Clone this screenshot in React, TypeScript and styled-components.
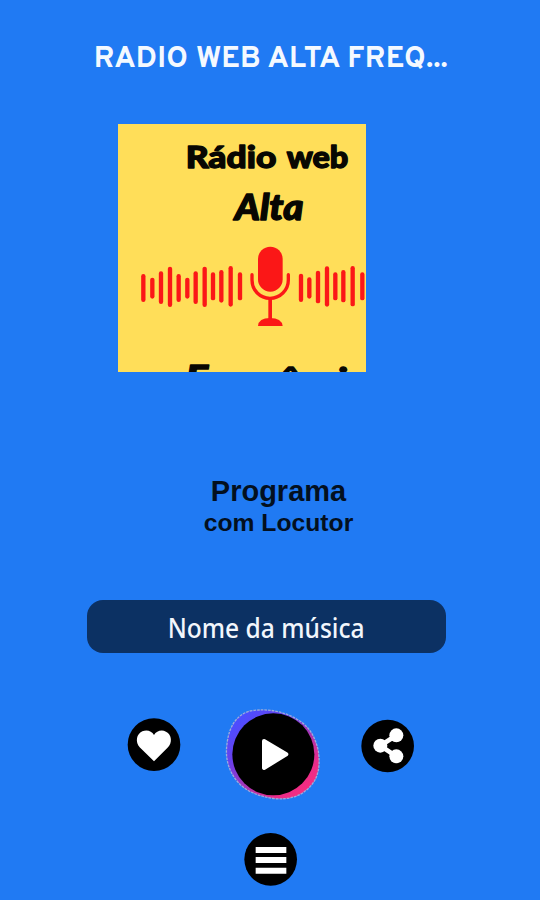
import React from "react";
import styled, { createGlobalStyle } from "styled-components";

const GlobalStyle = createGlobalStyle`
  * { box-sizing: border-box; }
  body { margin: 0; background: #207af3; }
`;

const Screen = styled.main`
  width: 540px;
  height: 900px;
  overflow: hidden;
  display: flex;
  flex-direction: column;
  align-items: center;
  background: #207af3;
`;

const Title = styled.h1`
  margin: 42px 0 0;
  padding-left: 2px;
  height: 36px;
  font: 700 30px/36px Overpass, Inter, sans-serif;
  letter-spacing: 0.25px;
  white-space: nowrap;
  color: #f4f9ff;
`;

const Cover = styled.svg`
  display: block;
  flex: none;
  width: 248px;
  height: 248px;
  margin: 46px 56px 0 0;
  background: #ffde59;
`;

const CoverText = styled.text`
  font-family: Lato, sans-serif;
  font-weight: 900;
  fill: #080702;
  stroke: #080702;
  stroke-width: 4px;
  stroke-linejoin: round;
`;

const Program = styled.section`
  display: flex;
  flex-direction: column;
  align-items: center;
  margin-top: 103px;
  padding-left: 17px;
  font-family: "Liberation Sans", Arial, sans-serif;
  font-weight: 700;
  color: #03101f;
`;

const ProgramName = styled.div`
  font-size: 29px;
  line-height: 32px;
`;

const Host = styled.div`
  font-size: 24.7px;
  line-height: 32px;
`;

const Song = styled.div`
  display: flex;
  align-items: center;
  justify-content: center;
  width: 359px;
  height: 53px;
  margin: 61px 8px 0 0;
  padding-top: 2px;
  border-radius: 16px;
  background: #0c3163;
`;

const SongName = styled.span`
  font: 500 27px/36px "Noto Sans", sans-serif;
  white-space: nowrap;
  color: #f2f6fc;
  transform: scaleX(0.91);
`;

const Controls = styled.div`
  display: flex;
  justify-content: space-between;
  align-items: flex-start;
  width: 288px;
  height: 96px;
  margin: 53px 0 0 2px;
`;

const RoundButton = styled.button<{ $drop?: number; $shift?: number }>`
  flex: none;
  width: 54px;
  height: 54px;
  margin: ${(p) => p.$drop ?? 0}px 0 0 ${(p) => p.$shift ?? 0}px;
  padding: 0;
  border: 0;
  border-radius: 50%;
  background: none;
  svg { display: block; width: 54px; height: 54px; }
`;

const PlayButton = styled.button`
  flex: none;
  width: 96px;
  height: 96px;
  margin: 0 0 0 3px;
  padding: 0;
  border: 0;
  background: none;
  svg { display: block; width: 96px; height: 96px; }
`;

const bars: [number, number, number][] = [
  [100, 102, 186], [127, 113, 176], [153, 94, 192], [180, 80, 201],
  [206, 102, 186], [232, 113, 176], [257, 94, 192], [284, 80, 201],
  [309, 97, 181], [334, 90, 188], [362, 78, 200], [390, 97, 181],
  [573, 101, 186], [598, 112, 176], [624, 92, 190], [651, 79, 200],
  [676, 97, 181], [700, 90, 187], [728, 78, 199], [757, 97, 181],
];

function CoverArt() {
  return (
    <Cover viewBox="24 -348 744 744">
      <CoverText y="-217" fontSize="92">
        <tspan x="227" textLength="272" lengthAdjust="spacingAndGlyphs">Rádio</tspan>
        <tspan x="530" textLength="185" lengthAdjust="spacingAndGlyphs">web</tspan>
      </CoverText>
      <CoverText x="374" y="-60" fontSize="106" fontStyle="italic" textLength="206" lengthAdjust="spacingAndGlyphs">Alta</CoverText>
      <CoverText y="453" fontStyle="italic">
        <tspan x="226" fontSize="110" textLength="68" lengthAdjust="spacingAndGlyphs">F</tspan>
        <tspan x="283" fontSize="94" textLength="488" lengthAdjust="spacingAndGlyphs">requência</tspan>
      </CoverText>
      <g fill="#fb1717">
        {bars.map(([x, top, bottom]) => (
          <rect key={x} x={x - 6.5} y={top} width="13" height={bottom - top} rx="6.5" />
        ))}
        <rect x="444" y="20" width="74" height="135" rx="37" />
        <rect x="475" y="174" width="11" height="66" />
        <path d="M444 258Q446 234 480 234Q515 234 518 258Z" />
      </g>
      <path d="M426 104V120C426 151 450 175 480 175C510 175 535 151 535 120V104" fill="none" stroke="#fb1717" strokeWidth="10" strokeLinecap="round" />
    </Cover>
  );
}

export default function App() {
  return (
    <>
      <GlobalStyle />
      <Screen>
        <Title>RADIO WEB ALTA FREQ...</Title>
        <CoverArt />
        <Program>
          <ProgramName>Programa</ProgramName>
          <Host>com Locutor</Host>
        </Program>
        <Song><SongName>Nome da música</SongName></Song>
        <Controls>
          <RoundButton $drop={12} aria-label="Favoritar">
            <svg viewBox="0 0 162 162">
              <circle cx="81" cy="80" r="79" fill="#000" />
              <path d="M81 130L38 88C24 72 28 48 46 40C60 34 74 39 81 51C88 39 104 34 117 41C135 50 136 74 123 88Z" fill="#fff" />
            </svg>
          </RoundButton>
          <PlayButton aria-label="Tocar">
            <svg viewBox="31 18 288 288">
              <defs>
                <linearGradient id="ring" x1="0.15" y1="0.1" x2="0.85" y2="0.9">
                  <stop offset="0" stopColor="#4c4dff" />
                  <stop offset="0.28" stopColor="#6a40ea" />
                  <stop offset="0.58" stopColor="#a834b4" />
                  <stop offset="0.85" stopColor="#e92c8a" />
                  <stop offset="1" stopColor="#f52d80" />
                </linearGradient>
              </defs>
              <path d="M105 33C160 24 207 34 247 58C285 79 302 112 311 153C317 196 312 232 288 258C259 290 225 299 181 296C131 289 89 274 63 238C41 209 31 172 37 132C43 80 64 46 105 33Z" fill="url(#ring)" stroke="#9cabdc" strokeWidth="4" strokeDasharray="8 3" />
              <circle cx="176" cy="163" r="123" fill="#000" />
              <path d="M148 123L215 163L148 204Z" fill="#fff" stroke="#fff" strokeWidth="12" strokeLinejoin="round" />
            </svg>
          </PlayButton>
          <RoundButton $drop={13} aria-label="Compartilhar">
            <svg viewBox="0 0 162 162">
              <circle cx="80" cy="81" r="79" fill="#000" />
              <path d="M106 49L58 80L106 112" fill="none" stroke="#fff" strokeWidth="14" />
              <circle cx="106" cy="49" r="21" fill="#fff" />
              <circle cx="58" cy="80" r="21" fill="#fff" />
              <circle cx="106" cy="112" r="21" fill="#fff" />
            </svg>
          </RoundButton>
        </Controls>
        <RoundButton $drop={30} $shift={2} aria-label="Menu">
          <svg viewBox="0 0 162 162">
            <circle cx="80" cy="82" r="79" fill="#000" />
            <path d="M35 54H127M35 84H127M35 116H127" stroke="#fff" strokeWidth="18" />
          </svg>
        </RoundButton>
      </Screen>
    </>
  );
}
